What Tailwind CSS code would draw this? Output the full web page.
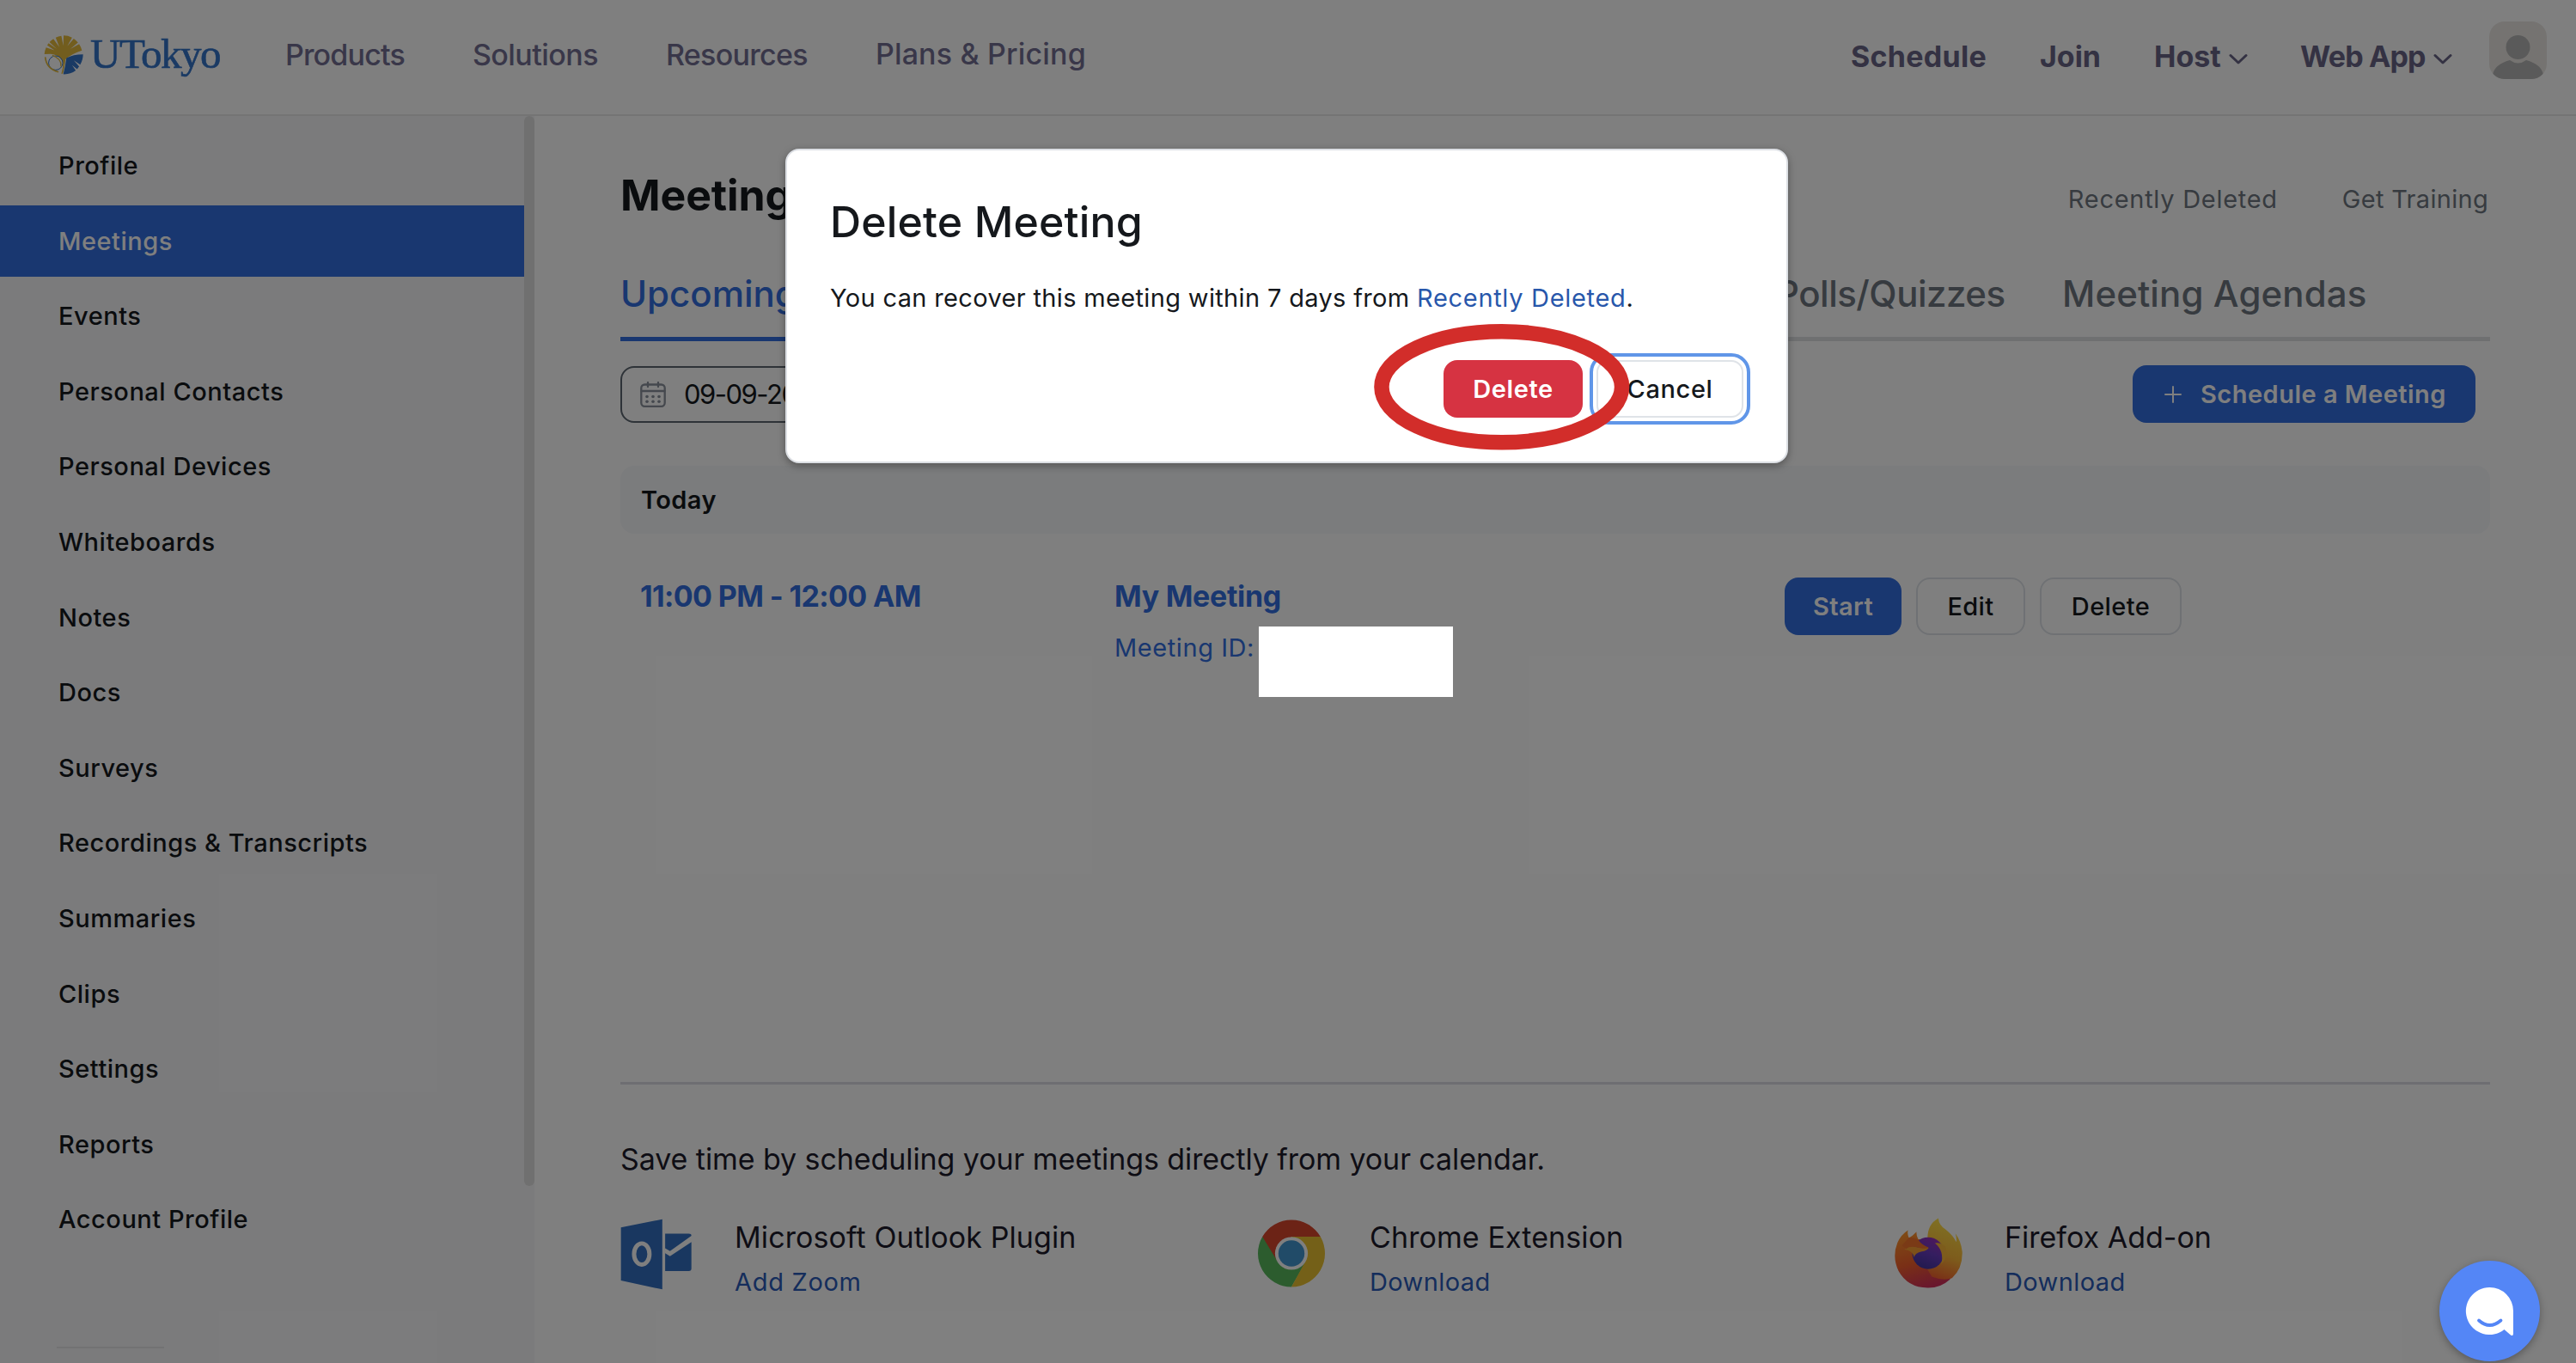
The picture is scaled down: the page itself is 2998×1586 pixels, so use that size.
<!DOCTYPE html>
<html lang="en">
<head>
<meta charset="utf-8">
<title>Meetings</title>
<script src="https://cdn.jsdelivr.net/npm/@tailwindcss/browser@4"></script>
</head>
<body class="relative w-[2998px] h-[1586px] overflow-hidden bg-white font-['Inter',sans-serif] text-[#15181c] whitespace-nowrap">

<!-- Top navigation -->
<header class="h-[135px] flex items-start border-b-2 border-[#e9e9e9] text-[34px] leading-[40px] text-[#726e92]">
  <div class="flex items-center ml-[51px] mt-[40px] h-[48px]">
    <svg class="w-[46px] h-[46px]" viewBox="62 62 140 138">
      <path fill="#e4bb3c" d="M64 128 A69 69 0 0 1 70 104 L100 114 L74 97 A69 69 0 0 1 79 89 L108 110 L82 85 A69 69 0 0 1 96 74 L117 103 L104 69 A69 69 0 0 1 124 63 L131 98 L132 62 A69 69 0 0 1 162 69 L145 100 L168 73 A69 69 0 0 1 183 87 L156 110 L187 92 A69 69 0 0 1 197 115 Q158 128 139 146 Q134 180 129 197 L124 197 Q133 168 129 152 Q112 128 86 127 Z"/>
      <path fill="#3474c8" d="M142 142 Q166 129 201 129 A69 69 0 0 1 191 165 L168 150 L187 171 L180 181 L162 167 L175 186 A69 69 0 0 1 131 199 Q138 174 142 142 Z"/>
      <circle cx="104" cy="159" r="25" fill="none" stroke="#3474c8" stroke-width="3"/>
      <path d="M67 138 Q71 180 114 191" fill="none" stroke="#e4bb3c" stroke-width="5"/>
      <path d="M92 132 Q126 144 123 172" fill="none" stroke="#e4bb3c" stroke-width="4"/>
    </svg>
    <span class="ml-[8px] mt-[-2px] font-['Liberation_Serif',serif] text-[49px] leading-[48px] tracking-[-1.5px] text-[#3474c8] [-webkit-text-stroke:0.6px_#3474c8]">UTokyo</span>
  </div>
  <nav class="flex pt-[44px] pl-[76px] font-medium">
    <span class="w-[218px] tracking-[-0.82px]">Products</span>
    <span class="w-[225px] tracking-[-0.55px]">Solutions</span>
    <span class="w-[244px] tracking-[-0.69px]">Resources</span>
    <span class="tracking-[0.17px] -mt-px">Plans &amp; Pricing</span>
  </nav>
  <div class="flex ml-auto pt-[46px] font-bold text-[#686486]">
    <span class="w-[220px] tracking-[0.28px]">Schedule</span>
    <span class="w-[133px] tracking-[-0.03px]">Join</span>
    <span class="w-[170px] flex items-center"><span class="w-[87px]">Host</span><svg class="w-[22px] h-[14px] mt-[5px]" viewBox="0 0 22 14" fill="none" stroke="currentColor" stroke-width="3" stroke-linecap="round" stroke-linejoin="round"><path d="M2 2.500l9 8.500 9-8.500"/></svg></span>
    <span class="flex items-center w-[220px]"><span class="w-[155px] tracking-[-0.85px]">Web App</span><svg class="w-[22px] h-[14px] mt-[5px]" viewBox="0 0 22 14" fill="none" stroke="currentColor" stroke-width="3" stroke-linecap="round" stroke-linejoin="round"><path d="M2 2.500l9 8.500 9-8.500"/></svg></span>
  </div>
  <svg class="w-[67px] h-[67px] mt-[25px] mr-[34px] rounded-[18px] bg-[#eae7e2]" viewBox="0 0 67 67">
    <circle cx="33.500" cy="30" r="14" fill="#b4b4b4"/>
    <path d="M4 62 Q6 50 24 45 Q33.500 52 43 45 Q61 50 63 62 Q58 67 50 67 H17 Q9 67 4 62Z" fill="#b4b4b4"/>
  </svg>
</header>

<div class="flex h-[1451px]">
  <!-- Sidebar -->
  <aside class="flex w-[622px] bg-[#f7f7f9]">
    <div class="w-[610px]">
      <ul class="flex flex-col gap-[4.1px] pt-[16px] text-[29px] font-medium tracking-[0.52px] text-[#15181c] [&>li]:h-[83.5px] [&>li]:flex [&>li]:items-center [&>li]:pl-[68px]">
        <li>Profile</li>
        <li class="bg-[#326ee0] text-white">Meetings</li>
        <li>Events</li>
        <li>Personal Contacts</li>
        <li>Personal Devices</li>
        <li>Whiteboards</li>
        <li>Notes</li>
        <li>Docs</li>
        <li>Surveys</li>
        <li>Recordings &amp; Transcripts</li>
        <li>Summaries</li>
        <li>Clips</li>
        <li>Settings</li>
        <li>Reports</li>
        <li>Account Profile</li>
      </ul>
      <div class="mt-[106px] ml-[66px] w-[125px] h-[2px] bg-[#e4e4e6]"></div>
    </div>
    <div class="w-[12px] h-[1245px] rounded-full bg-[#e0e0e0]"></div>
  </aside>

  <!-- Main content -->
  <main class="flex-1 px-[100px]">
    <div class="flex items-center justify-between h-[183px]">
      <h1 class="pt-px text-[50px] font-bold tracking-[-0.1px]">Meetings</h1>
      <div class="flex gap-[75px] pt-[11px] pr-[2px] text-[29px] text-[#6e7680]">
        <span class="tracking-[0.72px]">Recently Deleted</span>
        <span class="tracking-[0.3px]">Get Training</span>
      </div>
    </div>

    <div class="flex h-[79px] border-b-[5px] border-[#dfe0e2] text-[42px] leading-[48px] font-medium text-[#6e7680]">
      <span class="h-[79px] w-[260px] border-b-[5px] border-[#326ee0] text-[#326ee0] shrink-0">Upcoming</span>
      <span class="ml-auto w-[333px] tracking-[-0.5px]">Polls/Quizzes</span>
      <span class="w-[498px] tracking-[0.1px]">Meeting Agendas</span>
    </div>

    <div class="flex justify-between mt-[28px] h-[67px]">
      <div class="flex items-center w-[420px] mt-px h-[66px] border-2 border-[#5c6670] rounded-[16px] pl-[21px]">
        <svg class="w-[30px] h-[30px]" viewBox="0 0 30 30" fill="none" stroke="#8a919c" stroke-width="2.300" stroke-linecap="round">
          <rect x="1.300" y="3.500" width="27.400" height="25.300" rx="4"/>
          <path d="M1.500 11h27M9 1v5M21 1v5"/>
          <g fill="#8a919c" stroke="none"><circle cx="8" cy="17.500" r="1.800"/><circle cx="15" cy="17.500" r="1.800"/><circle cx="22" cy="17.500" r="1.800"/><circle cx="8" cy="23.300" r="1.800"/><circle cx="15" cy="23.300" r="1.800"/><circle cx="22" cy="23.300" r="1.800"/></g>
        </svg>
        <span class="ml-[21px] text-[31px] tracking-[-1.5px]">09-09-2025</span>
      </div>
      <button class="flex items-center mr-[17px] w-[399px] h-[67px] rounded-[16px] bg-[#326ee0] text-white text-[29px] font-semibold tracking-[0.48px] pl-[37px]">
        <svg class="w-[20px] h-[20px]" viewBox="0 0 20 20" stroke="currentColor" stroke-width="2" stroke-linecap="round"><path d="M10 1v18M1 10h18"/></svg>
        <span class="ml-[22px]">Schedule a Meeting</span>
      </button>
    </div>

    <div class="flex items-center mt-[50px] h-[79px] rounded-[16px] bg-[#f6f8fb] pl-[24px] text-[29px] font-semibold tracking-[0.4px]">Today</div>

    <div class="flex h-[638px] text-[#326ee0]">
      <div class="w-[575px] pt-[52px] pl-[23px] text-[34px] leading-[42px] font-bold tracking-[-0.62px]">11:00 PM - 12:00 AM</div>
      <div class="w-[780px] pt-[52px]">
        <div class="text-[34px] leading-[42px] font-bold tracking-[-0.3px]">My Meeting</div>
        <div class="text-[29px] leading-[40px] mt-[19px] tracking-[0.58px]">Meeting ID:</div>
      </div>
      <div class="flex gap-[17px] pt-[51px] text-[29px] font-medium tracking-[0.4px] text-[#15181c]">
        <button class="w-[136px] h-[67px] rounded-[16px] bg-[#326ee0] text-white font-semibold">Start</button>
        <button class="w-[127px] h-[67px] rounded-[16px] border-2 border-[#dfe3e8]">Edit</button>
        <button class="w-[165px] h-[67px] rounded-[16px] border-2 border-[#dfe3e8]">Delete</button>
      </div>
    </div>

    <div class="border-t-[3px] border-[#dcdce4] pt-[67px] text-[#1d1b2b]">
      <p class="text-[34px] leading-[40px] tracking-[-0.08px]">Save time by scheduling your meetings directly from your calendar.</p>
      <div class="flex mt-[47px]">
        <div class="flex w-[739px]">
          <div class="w-[133px] pt-[2px]">
            <svg class="w-[83px] h-[83px]" viewBox="36 35 250 248">
              <path fill="#326fc0" d="M38 65 L183 36 V282 L38 251Z"/>
              <path fill="#326fc0" d="M193 87 H276 Q285 87 285 94 L210 148 L193 138Z M193 155 L210 166 L285 116 V209 Q285 218 276 218 H193Z"/>
              <ellipse cx="111" cy="158" rx="27" ry="37" fill="none" stroke="#fff" stroke-width="15"/>
            </svg>
          </div>
          <div class="pt-[2px]"><div class="text-[34px] leading-[44px] tracking-[0.1px]">Microsoft Outlook Plugin</div><div class="text-[29px] leading-[40px] mt-[10px] tracking-[0.7px] text-[#2a5bb8]">Add Zoom</div></div>
        </div>
        <div class="flex w-[739px]">
          <div class="w-[133px] pl-[3px] pt-[3px]">
            <svg class="w-[78px] h-[79px]" viewBox="-50 -50 100 100">
              <path fill="#58b85c" d="M-43.300 -25 A50 50 0 0 0 0 50 L22 11.500 L0 0Z"/>
              <path fill="#e8c030" d="M0 50 A50 50 0 0 0 43.300 -25 H0 L20.800 12Z"/>
              <path fill="#d8472c" d="M-43.300 -25 A50 50 0 0 1 43.300 -25 H0 L-20.800 12Z"/>
              <circle r="24.500" fill="#fff"/><circle r="19.500" fill="#4296d0"/>
            </svg>
          </div>
          <div class="pt-[2px]"><div class="text-[34px] leading-[44px] tracking-[0.1px]">Chrome Extension</div><div class="text-[29px] leading-[40px] mt-[10px] tracking-[0.4px] text-[#2a5bb8]">Download</div></div>
        </div>
        <div class="flex">
          <div class="w-[133px] pl-[5px] pt-[1px]">
            <svg class="w-[79px] h-[82px]" viewBox="44 33 239 247">
              <defs>
                <linearGradient id="body" x1="0.200" y1="0" x2="0.500" y2="1"><stop offset="0" stop-color="#ff9a2c"/><stop offset=".55" stop-color="#f4602c"/><stop offset="1" stop-color="#d2305c"/></linearGradient>
                <linearGradient id="flame" x1="0.600" y1="0" x2="0.400" y2="1"><stop offset="0" stop-color="#ffe64a"/><stop offset=".6" stop-color="#fbb838"/><stop offset="1" stop-color="#f4642e"/></linearGradient>
                <linearGradient id="globe" x1="0.800" y1="0" x2="0.400" y2="1"><stop offset="0" stop-color="#a030b8"/><stop offset=".5" stop-color="#6a3cc0"/><stop offset="1" stop-color="#4436a0"/></linearGradient>
              </defs>
              <path fill="url(#body)" d="M91 76 Q88 90 94 103 Q106 98 121 82 Q120 96 127 108 L240 110 Q275 200 238 250 Q205 280 160 279 Q90 278 58 220 Q34 170 54 120 Q66 92 91 76Z"/>
              <path fill="url(#flame)" d="M198 34 Q200 60 225 75 Q250 95 261 118 Q263 105 258 88 Q278 115 282 152 Q284 210 246 245 Q215 256 175 240 L160 215 V104 Q160 55 198 34Z"/>
              <circle cx="162" cy="157" r="56" fill="url(#globe)"/>
              <path fill="#f9a032" d="M78 144 Q92 128 124 136 L164 138 Q158 148 140 151 Q116 156 112 172 Q110 150 78 144Z"/>
              <path fill="#f4742c" d="M94 103 Q112 100 127 110 Q140 128 164 137 Q156 144 130 138 Q98 130 84 142 L70 130Z"/>
              <path fill="#fbb838" d="M186 122 Q204 118 222 134 Q238 168 208 196 Q220 150 186 122Z"/>
            </svg>
          </div>
          <div class="pt-[2px]"><div class="text-[34px] leading-[44px]">Firefox Add-on</div><div class="text-[29px] leading-[40px] mt-[10px] tracking-[0.4px] text-[#2a5bb8]">Download</div></div>
        </div>
      </div>
    </div>
  </main>
</div>

<!-- Page dimmer -->
<div class="absolute inset-0 bg-black/50"></div>

<!-- Masked meeting number -->
<div class="absolute left-[1465px] top-[729px] w-[226px] h-[82px] bg-white"></div>

<!-- Delete dialog -->
<section class="absolute left-[914px] top-[173px] w-[1167px] h-[366px] rounded-[16px] bg-white border-2 border-[#dcdfe4] shadow-[0_3px_10px_rgba(0,0,0,0.35)] pl-[50px]">
  <h2 class="pt-[53px] text-[50px] leading-[60px] font-medium tracking-[0.15px]">Delete Meeting</h2>
  <p class="mt-[39px] text-[29px] leading-[40px] tracking-[0.34px]">You can recover this meeting within 7 days from <span class="text-[#2857ab] tracking-[0.68px]">Recently Deleted</span>.</p>
  <div class="flex justify-end mt-[52px] mr-[50px] gap-[16px] text-[29px] tracking-[0.6px]">
    <button class="w-[162px] h-[67px] rounded-[16px] bg-[#d63342] text-white font-semibold">Delete</button>
    <button class="w-[171px] h-[67px] rounded-[14px] border-2 border-[#dfe3e8] font-medium outline-[4px] outline-offset-[4px] outline-[#6096e8] outline-solid">Cancel</button>
  </div>
</section>

<!-- Highlight ring -->
<svg class="absolute left-[1599px] top-[377px] w-[298px] h-[147px]" viewBox="0 0 298 147"><ellipse cx="148.750" cy="73.300" rx="139.800" ry="64.500" fill="none" stroke="#d22d2a" stroke-width="17.500"/></svg>

<!-- Chat launcher -->
<div class="absolute left-[2839px] top-[1467px] w-[117px] h-[117px] rounded-full bg-[#5486f6] shadow-[0_3px_10px_rgba(0,0,0,0.3)]">
  <svg class="w-[117px] h-[117px]" viewBox="0 0 117 117">
    <path fill="#fff" d="M58.500 31 A27.500 27.500 0 0 1 86 58.500 V85 Q86 88 83 86.500 L75.500 80 A27.500 27.500 0 1 1 58.500 31Z"/>
    <path d="M46 69.500 Q58.500 80.500 71.500 69.500" fill="none" stroke="#5486f6" stroke-width="3.800" stroke-linecap="round"/>
  </svg>
</div>
</body>
</html>
